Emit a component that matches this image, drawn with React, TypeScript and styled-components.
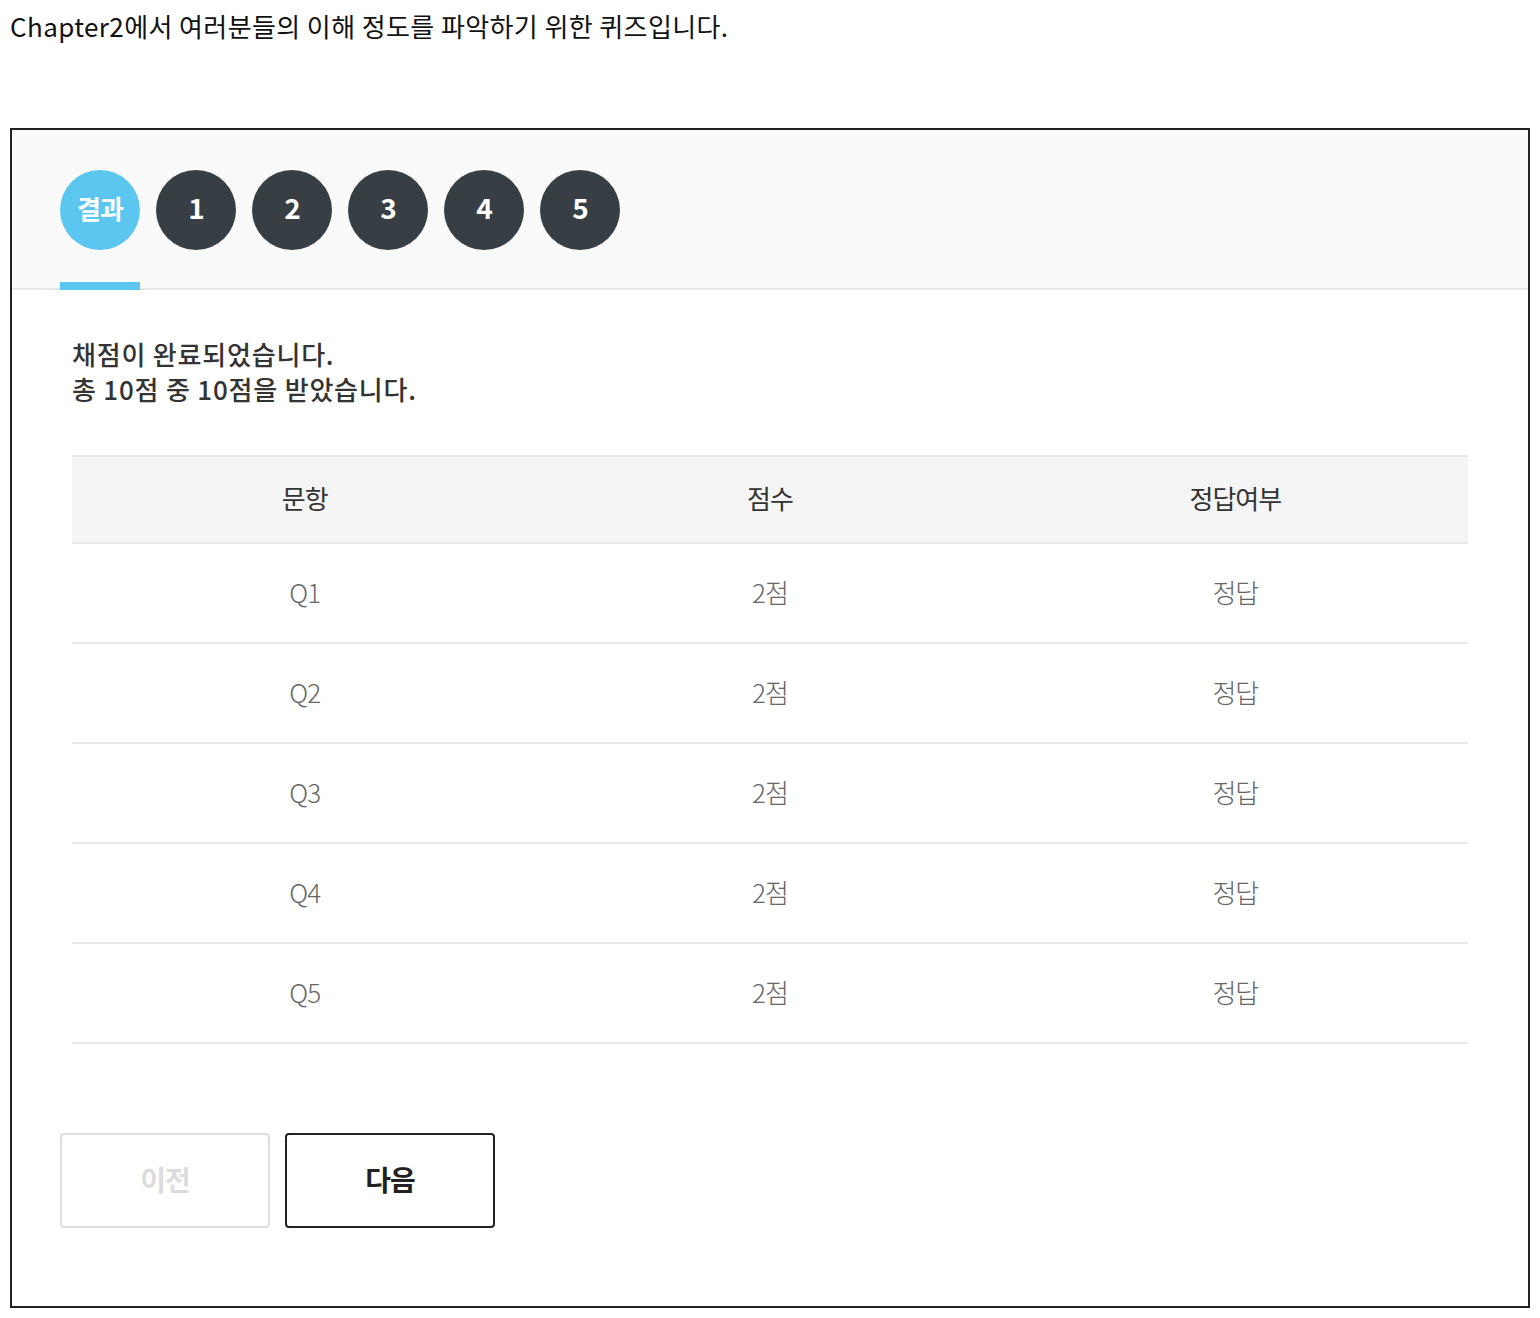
import React from "react";
import styled, { createGlobalStyle } from "styled-components";

const GlobalStyle = createGlobalStyle`
  html, body { margin: 0; padding: 0; background: #fff; }
  body {
    font-family: "Noto Sans CJK KR", "Noto Sans", sans-serif;
    color: #222;
  }
  * { box-sizing: border-box; }
`;

const Page = styled.div`
  padding: 10px;
`;

const Intro = styled.p`
  margin: 0 0 86px;
  font-size: 26px;
  line-height: 32px;
  letter-spacing: 0.4px;
  color: #111;
`;

const QuizBox = styled.section`
  border: 2px solid #222;
`;

const TabBar = styled.nav`
  display: flex;
  gap: 16px;
  padding: 40px 48px 0;
  background: #fafafa;
  border-bottom: 2px solid #e6e6e6;
`;

const Tab = styled.div<{ $active?: boolean }>`
  display: flex;
  flex-direction: column;
  padding-bottom: 32px;
  margin-bottom: -2px;
  border-bottom: 8px solid ${(p) => (p.$active ? "#5bc7f1" : "transparent")};
`;

const Circle = styled.div<{ $active?: boolean }>`
  width: 80px;
  height: 80px;
  border-radius: 50%;
  display: flex;
  align-items: center;
  justify-content: center;
  padding-bottom: 6px;
  background: ${(p) => (p.$active ? "#5bc7f1" : "#373e44")};
  color: #fff;
  font-weight: 700;
  font-size: ${(p) => (p.$active ? "26px" : "28px")};
  letter-spacing: -1px;
`;

const Body = styled.div`
  padding: 46px 48px 78px;
`;

const Result = styled.div`
  padding: 0 12px;
`;

const Summary = styled.p`
  margin: 0 0 49px;
  font-size: 26px;
  line-height: 35px;
  font-weight: 500;
  color: #333;
  letter-spacing: 0.8px;
`;

const Table = styled.div`
  display: grid;
  grid-template-columns: repeat(3, 1fr);
  border-top: 2px solid #e8e8e8;
`;

const HeadCell = styled.div`
  height: 87px;
  display: flex;
  align-items: center;
  justify-content: center;
  padding-bottom: 4px;
  background: #f5f5f5;
  border-bottom: 2px solid #e8e8e8;
  font-size: 26px;
  color: #333;
  letter-spacing: -1px;
`;

const Cell = styled.div`
  height: 100px;
  display: flex;
  align-items: center;
  justify-content: center;
  padding-bottom: 4px;
  border-bottom: 2px solid #e8e8e8;
  font-size: 26px;
  font-weight: 300;
  color: #666;
  letter-spacing: -1px;
`;

const Buttons = styled.div`
  display: flex;
  gap: 15px;
  margin-top: 89px;
`;

const NavButton = styled.button<{ $disabled?: boolean }>`
  width: 210px;
  height: 95px;
  border-radius: 4px;
  background: #fff;
  border: 2px solid ${(p) => (p.$disabled ? "#dedede" : "#222")};
  color: ${(p) => (p.$disabled ? "#dcdcdc" : "#222")};
  font-family: "Noto Sans CJK KR", "Noto Sans", sans-serif;
  font-size: 28px;
  font-weight: 700;
  letter-spacing: -1px;
  padding: 0 0 4px;
  cursor: ${(p) => (p.$disabled ? "default" : "pointer")};
`;

const tabs = ["결과", "1", "2", "3", "4", "5"];
const rows = [1, 2, 3, 4, 5].map((n) => ({ q: `Q${n}`, score: "2점", result: "정답" }));

export default function App() {
  return (
    <Page>
      <GlobalStyle />
      <Intro>Chapter2에서 여러분들의 이해 정도를 파악하기 위한 퀴즈입니다.</Intro>
      <QuizBox>
        <TabBar>
          {tabs.map((t, i) => (
            <Tab key={t} $active={i === 0}>
              <Circle $active={i === 0}>{t}</Circle>
            </Tab>
          ))}
        </TabBar>
        <Body>
          <Result>
            <Summary>
              채점이 완료되었습니다.
              <br />총 10점 중 10점을 받았습니다.
            </Summary>
            <Table>
              <HeadCell>문항</HeadCell>
              <HeadCell>점수</HeadCell>
              <HeadCell>정답여부</HeadCell>
              {rows.map((r) => (
                <React.Fragment key={r.q}>
                  <Cell>{r.q}</Cell>
                  <Cell>{r.score}</Cell>
                  <Cell>{r.result}</Cell>
                </React.Fragment>
              ))}
            </Table>
          </Result>
          <Buttons>
            <NavButton $disabled>이전</NavButton>
            <NavButton>다음</NavButton>
          </Buttons>
        </Body>
      </QuizBox>
    </Page>
  );
}
